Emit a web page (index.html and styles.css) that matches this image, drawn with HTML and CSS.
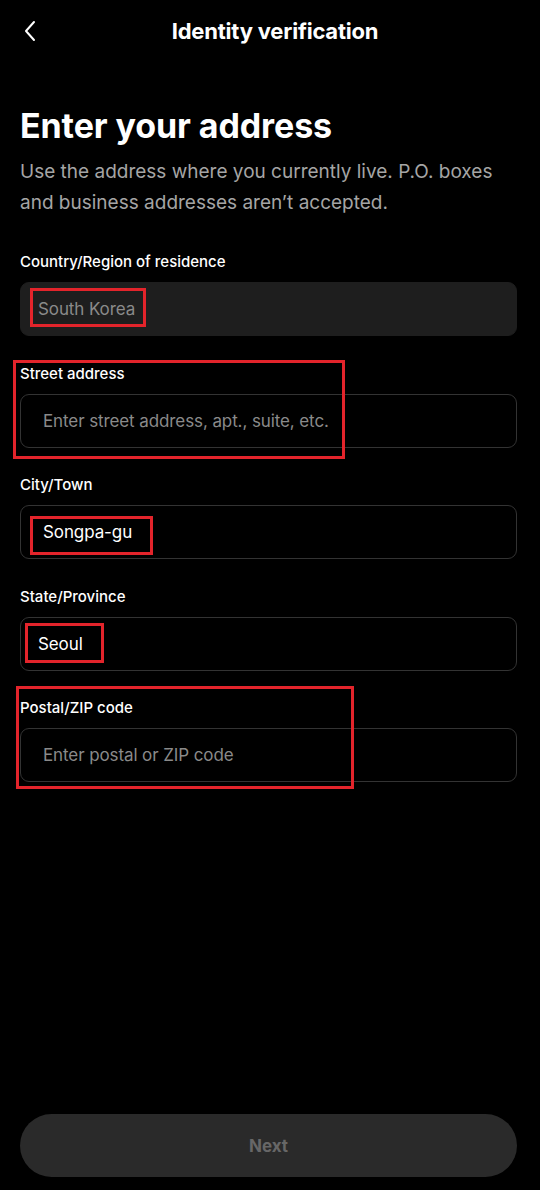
FILE: index.html
```html
<!DOCTYPE html>
<html lang="en">
<head>
  <meta charset="UTF-8">
  <meta name="viewport" content="width=device-width, initial-scale=1.0">
  <title>Identity verification</title>
  <link rel="stylesheet" href="styles.css">
</head>
<body>
  <div class="screen">
    <!-- Top bar -->
    <div class="top-bar">
      <button class="back-button" aria-label="Back">
        <svg width="14" height="22" viewBox="0 0 14 22" fill="none">
          <path d="M11 2 L3 11 L11 20" stroke="#fff" stroke-width="2" stroke-linecap="round" stroke-linejoin="round"/>
        </svg>
      </button>
      <div class="top-title">Identity verification</div>
    </div>

    <div class="content">
      <h1 class="heading">Enter your address</h1>
      <p class="intro">Use the address where you currently live. P.O. boxes and business addresses aren’t accepted.</p>

      <div class="form">
        <div class="field">
          <div class="field-label">Country/Region of residence</div>
          <div class="field-box locked">
            <span class="value muted">South Korea</span>
          </div>
          <span class="mark mark-country"></span>
        </div>

        <div class="field">
          <div class="field-label">Street address</div>
          <div class="field-box">
            <span class="value placeholder">Enter street address, apt., suite, etc.</span>
          </div>
          <span class="mark mark-street"></span>
        </div>

        <div class="field">
          <div class="field-label">City/Town</div>
          <div class="field-box">
            <span class="value">Songpa-gu</span>
          </div>
          <span class="mark mark-city"></span>
        </div>

        <div class="field">
          <div class="field-label">State/Province</div>
          <div class="field-box tight">
            <span class="value">Seoul</span>
          </div>
          <span class="mark mark-state"></span>
        </div>

        <div class="field">
          <div class="field-label">Postal/ZIP code</div>
          <div class="field-box">
            <span class="value placeholder">Enter postal or ZIP code</span>
          </div>
          <span class="mark mark-postal"></span>
        </div>
      </div>
    </div>

    <div class="footer">
      <button class="next-button" disabled>Next</button>
    </div>
  </div>
</body>
</html>
```

FILE: styles.css
```css
body {
  margin: 0;
  background: #000;
  color: #fff;
  font-family: Inter, "Noto Sans", sans-serif;
}

.screen {
  height: 1190px;
  display: flex;
  flex-direction: column;
  overflow: hidden;
}

.top-bar {
  height: 62px;
  display: flex;
  align-items: center;
  justify-content: center;
  position: relative;
}

.back-button {
  position: absolute;
  left: 23px;
  top: 20px;
  padding: 0;
  background: none;
  border: none;
  display: flex;
}

.top-title {
  font-size: 22px;
  font-weight: 700;
  letter-spacing: -0.2px;
  margin-left: 10px;
}

.content {
  padding: 0 23px 0 20px;
}

.heading {
  margin: 44px 0 0;
  font-size: 34px;
  font-weight: 700;
  line-height: 40px;
  letter-spacing: -0.1px;
}

.intro {
  margin: 10px 0 0;
  max-width: 480px;
  font-size: 19px;
  line-height: 31px;
  color: #a5a5a5;
}

.form {
  margin-top: 34px;
  display: flex;
  flex-direction: column;
  gap: 27.5px;
}

.field {
  position: relative;
}

.field-label {
  font-size: 15px;
  font-weight: 500;
  line-height: 20px;
  margin-bottom: 10px;
}

.field-box {
  height: 54px;
  box-sizing: border-box;
  border: 1px solid #333;
  border-radius: 9px;
  display: flex;
  align-items: center;
  padding: 0 22px;
}

.field-box.locked {
  background: #1e1e1e;
  border-color: #1e1e1e;
  padding-left: 17px;
}

.field-box.tight {
  padding-left: 17px;
}

.value {
  font-size: 17px;
  color: #fff;
  letter-spacing: -0.1px;
}

.value.muted,
.value.placeholder {
  color: #8a8a8a;
}

/* red annotation frames */
.mark {
  position: absolute;
  border: 3px solid #e3242b;
  pointer-events: none;
}

.mark-country { left: 10px; top: 36px; width: 110px; height: 33px; }
.mark-street { left: -7px; top: -4px; width: 326px; height: 93px; }
.mark-city { left: 10px; top: 41px; width: 117px; height: 33px; }
.mark-state { left: 5px; top: 36px; width: 73px; height: 34px; }
.mark-postal { left: -4px; top: -12px; width: 332px; height: 97px; }

.footer {
  margin-top: auto;
  padding: 0 23px 13px 20px;
}

.next-button {
  width: 100%;
  height: 63px;
  border: none;
  border-radius: 32px;
  background: #2a2a2a;
  color: #676767;
  font-family: inherit;
  font-size: 17px;
  font-weight: 700;
}
```
